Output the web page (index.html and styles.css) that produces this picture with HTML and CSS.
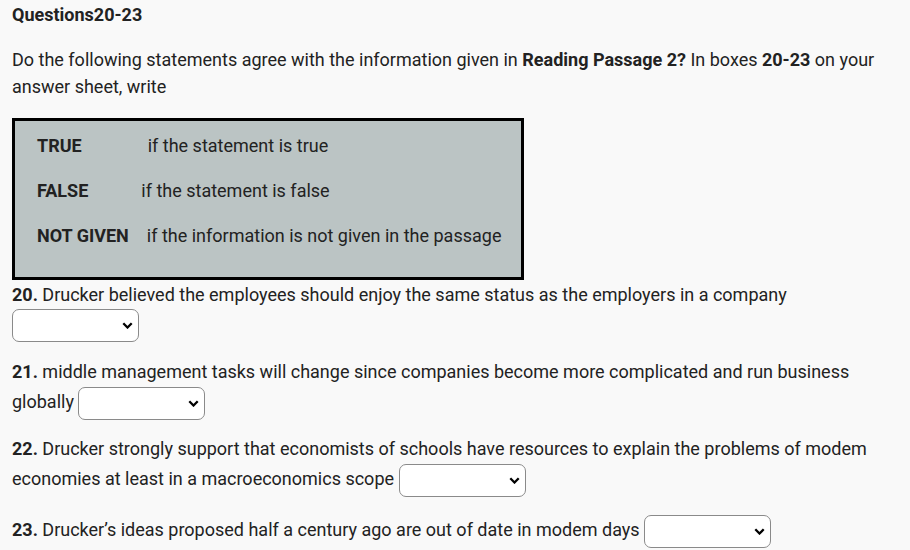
FILE: index.html
```html
<!DOCTYPE html>
<html>
<head>
<meta charset="utf-8">
<link rel="stylesheet" href="styles.css">
</head>
<body>
<div class="page">
  <h3 class="title">Questions20-23</h3>
  <p class="intro">Do the following statements agree with the information given in <b>Reading Passage 2?</b> In boxes <b>20-23</b> on your answer sheet, write</p>
  <div class="box">
    <p class="row"><b class="key">TRUE</b><span class="d1">if the statement is true</span></p>
    <p class="row"><b class="key">FALSE</b><span class="d2">if the statement is false</span></p>
    <p class="row"><b class="key">NOT GIVEN</b><span class="d3">if the information is not given in the passage</span></p>
  </div>
  <div class="q q20"><b>20.</b> Drucker believed the employees should enjoy the same status as the employers in a company<select class="sel sel-block"><option></option><option>TRUE</option><option>FALSE</option><option>NOT GIVEN</option></select></div>
  <div class="q q21"><b>21.</b> middle management tasks will change since companies become more complicated and run business globally <select class="sel"><option></option><option>TRUE</option><option>FALSE</option><option>NOT GIVEN</option></select></div>
  <div class="q q22"><b>22.</b> Drucker strongly support that economists of schools have resources to explain the problems of modem economies at least in a macroeconomics scope <select class="sel"><option></option><option>TRUE</option><option>FALSE</option><option>NOT GIVEN</option></select></div>
  <div class="q"><b>23.</b> Drucker’s ideas proposed half a century ago are out of date in modem days <select class="sel"><option></option><option>TRUE</option><option>FALSE</option><option>NOT GIVEN</option></select></div>
</div>
</body>
</html>
```
FILE: styles.css
```css
html, body {
  margin: 0;
  padding: 0;
  background: #f9f9f9;
}
.page {
  padding: 0 12px;
  font-family: Roboto, "Liberation Sans", sans-serif;
  font-size: 18px;
  color: #222;
}
.title {
  margin: 4px 0 0;
  font-size: 18px;
  line-height: 22px;
  font-weight: 700;
}
.intro {
  margin: 20px 0 0;
  line-height: 27px;
  padding-right: 20px;
}
.intro b { font-weight: 700; }
.box {
  margin-top: 18px;
  width: 512px;
  border: 3px solid #000;
  background: #bbc4c4;
  padding: 0 0 0 22px;
  box-sizing: border-box;
  height: 162px;
}
.row {
  margin: 0;
  height: 45px;
  line-height: 45px;
}
.row:first-child { margin-top: 2px; }
.key { font-weight: 700; display: inline-block; }
.d1 { margin-left: 66px; }
.d2 { margin-left: 53px; }
.d3 { margin-left: 18px; }
.q {
  line-height: 30px;
}
.q20 { line-height: 28px; margin-top: 1px; margin-bottom: 15px; }
.q21 { margin-bottom: 14px; }
.q22 { margin-bottom: 18px; }
.sel {
  width: 127px;
  height: 33px;
  vertical-align: middle;
  font-size: 16px;
  border: 1px solid #8a8a8a;
  border-radius: 7px;
  background-color: #fff;
  appearance: none;
  -webkit-appearance: none;
  background-image: url("data:image/svg+xml,%3Csvg xmlns='http://www.w3.org/2000/svg' width='11' height='7' viewBox='0 0 11 7'%3E%3Cpath d='M1.3 1.3l4.2 4.2 4.2-4.2' fill='none' stroke='%23000' stroke-width='2.3'/%3E%3C/svg%3E");
  background-repeat: no-repeat;
  background-position: right 5px center;
}
.sel-block { display: block; }
```
